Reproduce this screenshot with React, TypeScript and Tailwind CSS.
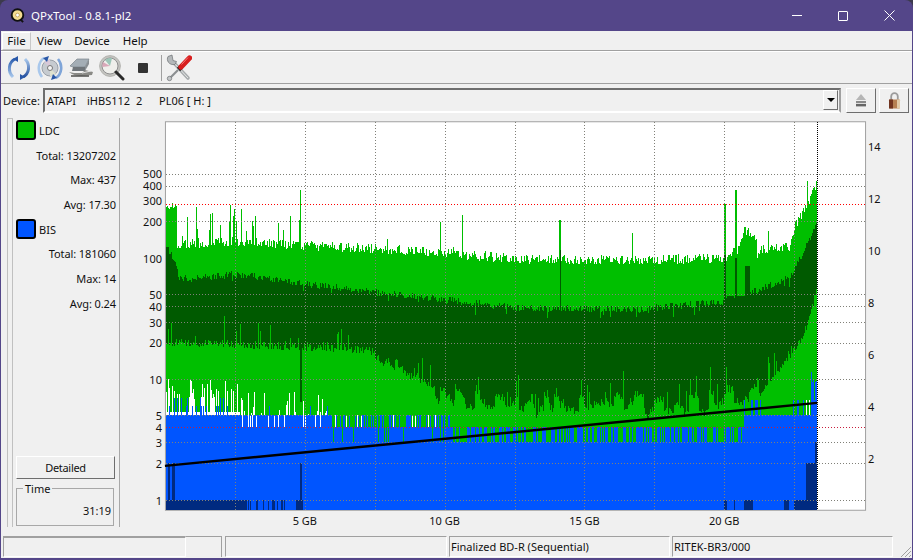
import React from "react";

// seeded random so the chart comes out the same on every load
const mulberry = (seed: number) => () => {
  seed |= 0;
  seed = (seed + 0x6d2b79f5) | 0;
  let t = Math.imul(seed ^ (seed >>> 15), 1 | seed);
  t = (t + Math.imul(t ^ (t >>> 7), 61 | t)) ^ t;
  return ((t ^ (t >>> 14)) >>> 0) / 4294967296;
};

const lerp = (pts: number[][], x: number) => {
  for (let i = 1; i < pts.length; i++) {
    if (x <= pts[i][0]) {
      const [x0, y0] = pts[i - 1];
      const [x1, y1] = pts[i];
      return y0 + ((y1 - y0) * (x - x0)) / (x1 - x0);
    }
  }
  return pts[pts.length - 1][1];
};

const topEnv = [
  [165, 206], [176, 207], [177, 244], [240, 241], [300, 245], [400, 250], [520, 259], [640, 260],
  [720, 258], [727, 256], [733, 250], [740, 250], [746, 228], [755, 236], [758, 250], [790, 247],
  [795, 228], [807, 205], [815, 190], [818, 182],
];
const darkTop = [
  [165, 246], [175, 260], [178, 278], [190, 279], [240, 274], [300, 283], [400, 295], [520, 308],
  [640, 309], [720, 302], [760, 290], [790, 277], [800, 260], [810, 240], [818, 222],
];
const darkBottom = [
  [165, 342], [300, 347], [370, 350], [400, 375], [440, 392], [500, 405], [700, 405], [755, 395],
  [775, 375], [790, 358], [800, 342], [810, 320], [818, 285],
];

const buildChart = () => {
  const rnd = mulberry(42);
  let light = "";
  let dark = "";
  let blue = "";
  let navy = "";
  let block = 0;
  for (let x = 166; x < 818; x++) {
    const px = x + 0.5;
    if (x % 5 === 0) block = rnd() * 22 - 11;
    let top = lerp(topEnv, x) + rnd() * 10 - 5;
    const spikeChance = x < 240 ? 0.22 : x < 300 ? 0.14 : 0.015;
    if (x > 177 && rnd() < spikeChance) top -= 8 + rnd() * 30;
    if (x > 745 && x < 760) top += rnd() * 10 - 5;
    if (x === 300) top = 190;
    if (x === 561 || x === 560) top = 220;
    if (x === 725 || x === 726) top = 204;
    if (x === 736 || x === 737) top = 190;

    let dTop = lerp(darkTop, x) + rnd() * 7 - 3.5;
    if (rnd() < 0.06) dTop += rnd() * 12;
    if (x === 725 || x === 726) dTop = 255;
    if (x === 736 || x === 737) dTop = 258;
    if ((x > 727 && x < 735) || (x > 738 && x < 746)) dTop = 296;
    if (x > 745 && x < 751) dTop = 266;
    let dBot = lerp(darkBottom, x) + rnd() * 8 - 4;
    if (x > 375 && x < 770) dBot += block;
    if (rnd() < 0.1) dBot -= rnd() * 26;
    if (x === 300 || x === 301) dBot = 402;
    if (x === 561) dTop = 250;
    if (x === 561) dBot = 408;

    // blue bars sit on fixed levels, the level shifts along the disc
    const p = rnd();
    let bTop = 427;
    if (x < 240) bTop = p < 0.7 ? 415 : p < 0.9 ? 406 : 398;
    else if (x < 330) bTop = p < 0.12 ? 427 : p < 0.92 ? 415 : 406;
    else if (x < 450) bTop = p < 0.08 ? 442 : p < 0.6 ? 427 : 415;
    else if (x < 745) bTop = p < 0.45 ? 442 : 427;
    else if (x < 812) bTop = p < 0.85 ? 415 : 400;
    else bTop = p < 0.5 ? 400 : 385 - rnd() * 20;

    // bottom of the light green below the dark band, white shows under it
    const q = rnd();
    let gBot = 415;
    if (x < 240) gBot = q < 0.45 ? 378 + rnd() * 22 : 412;
    else if (x < 330) gBot = q < 0.28 ? 392 + rnd() * 22 : 415;
    else if (x < 450) gBot = bTop === 442 ? 442 : q < 0.1 ? 415 : 427;
    else if (x < 745) gBot = 442;
    else if (x >= 790) gBot = q < 0.15 ? 400 : 415;

    light += `M${px} ${top.toFixed(1)}V${gBot.toFixed(1)}`;
    dark += `M${px} ${dTop.toFixed(1)}V${dBot.toFixed(1)}`;
    blue += `M${px} ${bTop.toFixed(1)}V510`;

    let nTop = 0;
    if (x < 247) nTop = 500;
    if (x < 176 && rnd() < 0.5) nTop = 463;
    if (x >= 247 && x < 285 && rnd() < 0.3) nTop = 500;
    if (x === 300 || x === 301) nTop = 463;
    if (x >= 296 && x < 303) nTop = nTop || 500;
    if (x >= 725 && x < 728) nTop = 500;
    if (x === 735) nTop = 500;
    if (x >= 745 && x < 754) nTop = 500;
    if (x >= 785 && x < 790) nTop = 500;
    if (x >= 795) nTop = 500;
    if (x >= 807) nTop = 463;
    if (x >= 816) nTop = 442;
    if (nTop) navy += `M${px} ${nTop}V510`;
  }
  return { light, dark, blue, navy };
};

const chart = buildChart();

const LEFT_TICKS: [string, number][] = [
  ["500", 174], ["400", 186], ["300", 201], ["200", 222], ["100", 259], ["50", 295], ["40", 307],
  ["30", 323], ["20", 343], ["10", 380], ["5", 416], ["4", 428], ["3", 443], ["2", 464], ["1", 501],
];
const GRID_Y = [174, 186, 221, 294, 306, 322, 343, 379, 415, 442, 463, 500];
const GRID_X = [235, 305, 375, 445, 515, 585, 655, 725, 795];
const RIGHT_TICKS: [string, number][] = [
  ["14", 147], ["12", 199], ["10", 251], ["8", 303], ["6", 355], ["4", 407], ["2", 459],
];
const X_TICKS: [string, number][] = [["5 GB", 305], ["10 GB", 445], ["15 GB", 585], ["20 GB", 725]];

const Chart = () => (
  <svg viewBox="122 115 791 415" className="w-[791px] h-[415px] block">
    <rect x="165.5" y="121.5" width="701" height="389" fill="#fff" stroke="#a0a0a0" />
    <g shapeRendering="crispEdges" fill="none" strokeWidth="1">
      <path d={chart.light} stroke="#00bf00" />
      <path d={chart.dark} stroke="#005a00" />
      <path d={chart.blue} stroke="#0055ff" />
      <path d={chart.navy} stroke="#002a80" />
      {GRID_Y.map((y) => (
        <path key={y} d={`M166 ${y + 0.5}H866`} stroke="#808078" strokeDasharray="1 2" />
      ))}
      {GRID_X.map((x) => (
        <path key={x} d={`M${x + 0.5} 122V510`} stroke="#808078" strokeDasharray="1 2" />
      ))}
      <path d="M166 204.5H866" stroke="#ff0000" strokeDasharray="1 2" />
      <path d="M166 427.5H866" stroke="#c81e3c" strokeDasharray="1 2" />
      <path d="M818.5 122V510" stroke="#000" strokeDasharray="1 1" />
    </g>
    <path d="M165 466L818 403" stroke="#000" strokeWidth="2.4" fill="none" />
    <g fontSize="11" fill="#111">
      {LEFT_TICKS.map(([t, y]) => (
        <text key={t} x="162" y={y + 4} textAnchor="end">{t}</text>
      ))}
      {RIGHT_TICKS.map(([t, y]) => (
        <text key={t} x="869" y={y + 4}>{t}</text>
      ))}
      {X_TICKS.map(([t, x]) => (
        <text key={t} x={x} y="525" textAnchor="middle">{t}</text>
      ))}
    </g>
  </svg>
);

const Stat = ({ label, value }: { label: string; value: string }) => (
  <div className="h-[24.7px] flex items-center justify-end whitespace-pre tracking-[-0.1px]">
    {label}: {value}
  </div>
);

const Swatch = ({ color, label }: { color: string; label: string }) => (
  <div className="h-[24.7px] flex items-center gap-[3px] pl-[3px]">
    <div className={`w-[20px] h-[20px] rounded-[3px] border-2 border-black ${color}`} />
    <span>{label}</span>
  </div>
);

const ReloadIcon = () => (
  <svg width="24" height="26" viewBox="0 0 24 26" fill="none">
    <defs>
      <linearGradient id="arcA" x1="0" y1="0" x2="0" y2="1">
        <stop offset="0" stopColor="#2d5fb0" />
        <stop offset="1" stopColor="#a9c8ec" />
      </linearGradient>
      <linearGradient id="arcB" x1="0" y1="0" x2="0" y2="1">
        <stop offset="0" stopColor="#a9c8ec" />
        <stop offset="1" stopColor="#234f9f" />
      </linearGradient>
    </defs>
    <path d="M8 4C2 7 0 16 6 22" stroke="url(#arcA)" strokeWidth="3" />
    <path d="M16 22C22 19 24 10 18 4" stroke="url(#arcB)" strokeWidth="3" />
    <path d="M6 4l5-3v6zM18 22l-5 3v-6z" fill="#2a58a8" />
  </svg>
);

const DiscReloadIcon = () => (
  <svg width="26" height="26" viewBox="0 0 26 26" fill="none">
    <circle cx="13" cy="13" r="8" fill="#c6cbd0" stroke="#9aa0a8" />
    <path d="M13 13L7 7A8 8 0 0 1 13 5z" fill="#d8c8d8" />
    <path d="M13 13L19 19A8 8 0 0 1 13 21z" fill="#dfe2d0" />
    <circle cx="13" cy="13" r="2.5" fill="#f5f5f5" stroke="#777" />
    <path d="M7 3C1 7 0 16 5 22" stroke="#a9c8ec" strokeWidth="2.6" />
    <path d="M19 23C25 19 26 10 21 4" stroke="#7fa5d8" strokeWidth="2.6" />
    <path d="M6 3l6-2-2 6zM20 23l-6 2 2-6z" fill="#2a58a8" />
  </svg>
);

const DriveIcon = () => (
  <svg width="26" height="22" viewBox="0 0 26 22" fill="none">
    <path d="M2 9L9 2h12l-4 8H5z" fill="#a4aeb6" stroke="#7c858c" strokeWidth=".7" />
    <path d="M5 10h12v4H4z" fill="#6f757a" />
    <path d="M17 10l4-8v5l-4 7z" fill="#888e93" />
    <path d="M1 15c4 3 8 4 12 4l11-1 1-3-8-2-3 3H6z" fill="#8a8a86" />
    <path d="M14 16l9-2" stroke="#e4e4e4" />
    <path d="M3 19h18" stroke="#4f4f4c" strokeWidth="1.4" />
  </svg>
);

const ScanIcon = () => (
  <svg width="26" height="26" viewBox="0 0 26 26" fill="none">
    <circle cx="11" cy="11" r="10.4" fill="#c4c4c0" stroke="#b4b4b0" />
    <circle cx="11" cy="11" r="8" fill="#efefeb" stroke="#8f8f8f" />
    <path d="M11 11L6 5A8 8 0 0 1 13 3.3z" fill="#9cc6b8" />
    <path d="M11 11L4 7A8 8 0 0 0 3.4 12z" fill="#d8a8b8" />
    <path d="M17 17L24 24" stroke="#2a2a2a" strokeWidth="3" strokeLinecap="round" />
  </svg>
);

const ToolsIcon = () => (
  <svg width="26" height="28" viewBox="0 0 26 28" fill="none">
    {/* wrench */}
    <path d="M9 10L22 24" stroke="#a8acae" strokeWidth="3.6" strokeLinecap="round" />
    <path d="M22 24L9 10" stroke="#e6e8e8" strokeWidth="1" />
    <path d="M2 2.5c-2 4 1 9 7 8l1.5-3L7 6.5 6 1z" fill="#b4b8ba" stroke="#6c7072" strokeWidth=".7" />
    {/* screwdriver */}
    <path d="M3 25L12 16" stroke="#8b8f91" strokeWidth="2.2" />
    <circle cx="3.5" cy="24.5" r="2.2" fill="#c4c6c8" stroke="#6c7072" strokeWidth=".7" />
    <path d="M12.5 15.5l3-3" stroke="#222" strokeWidth="4.6" />
    <path d="M15 13L23.5 4" stroke="#d81e1e" strokeWidth="5.4" strokeLinecap="round" />
    <path d="M15.5 10.5L22 3.5" stroke="#f47a7a" strokeWidth="1" />
  </svg>
);

const EjectIcon = () => (
  <svg width="12" height="14" viewBox="0 0 12 14">
    <path d="M6 1l5 6H1z" fill="#b5b5b5" />
    <rect x="1" y="8" width="10" height="2.2" fill="#8a8a8a" />
    <rect x="1" y="11" width="10" height="2.4" fill="#666" />
  </svg>
);

const LockIcon = () => (
  <svg width="13" height="17" viewBox="0 0 13 17" fill="none">
    <path d="M3.2 8V4.5a3.3 3.3 0 0 1 6.6 0V8" stroke="#9b9b9b" strokeWidth="1.8" />
    <rect x="1" y="7.5" width="11" height="9" rx="1" fill="#b57f52" />
    <rect x="1" y="7.5" width="4" height="9" fill="#70331f" />
    <rect x="9" y="7.5" width="3" height="9" fill="#e0c9a8" />
  </svg>
);

const raised = "border border-t-white border-l-white border-r-[#6e6e6e] border-b-[#6e6e6e]";

export default function App() {
  return (
    <div className="w-[913px] h-[560px] bg-[#3c3a4c]" style={{ fontFamily: "'Noto Sans', sans-serif" }}>
      <div className="w-full h-full rounded-t-[8px] overflow-hidden bg-[#544689] pb-[2px] px-[1px] flex flex-col text-[11px] leading-none text-[#111]">
        {/* Title bar */}
        <div className="h-[31px] shrink-0 flex items-center text-white -mx-[1px] pr-[1px]">
          <div className="w-[31px] flex justify-center pl-[3px]">
            <svg width="15" height="15" viewBox="0 0 16 16">
              <circle cx="8" cy="7.5" r="6.2" fill="#f4dc90" stroke="#111" strokeWidth="2" />
              <circle cx="8" cy="7.5" r="2" fill="#fff" stroke="#b08a40" strokeWidth=".7" />
              <path d="M11 12l3 3" stroke="#111" strokeWidth="2" />
            </svg>
          </div>
          <span className="text-[11.5px]">QPxTool - 0.8.1-pl2</span>
          <div className="ml-auto flex items-center">
            <div className="w-[46px] flex justify-center">
              <div className="w-[10px] h-px bg-white" />
            </div>
            <div className="w-[46px] flex justify-center">
              <div className="w-[10px] h-[10px] border border-white rounded-[1px]" />
            </div>
            <div className="w-[46px] flex justify-center">
              <svg width="11" height="11" viewBox="0 0 11 11">
                <path d="M.5.5l10 10M10.5.5l-10 10" stroke="#fff" />
              </svg>
            </div>
          </div>
        </div>

        <div className="flex-1 bg-[#f0f0f0] flex flex-col min-h-0">
          {/* Menu */}
          <div className="h-[19px] shrink-0 flex items-center pl-[1px] border-b border-[#a0a0a0] box-content text-[11.5px]">
            <div className="w-[29px] h-[18px] flex items-center justify-center border border-t-white border-l-white border-r-[#c8c8c8] border-b-[#c8c8c8]">File</div>
            <span className="ml-[6px]">View</span>
            <span className="ml-[12px]">Device</span>
            <span className="ml-[13px]">Help</span>
          </div>

          {/* Toolbar */}
          <div className="h-[33px] shrink-0 flex items-center pl-[2px] border-t border-t-white border-b border-b-[#a0a0a0]">
            <div className="w-[31px] flex justify-center"><ReloadIcon /></div>
            <div className="w-[31px] flex justify-center"><DiscReloadIcon /></div>
            <div className="w-[31px] flex justify-center"><DriveIcon /></div>
            <div className="w-[31px] flex justify-center"><ScanIcon /></div>
            <div className="w-[31px] flex justify-center"><div className="w-[10px] h-[10px] bg-[#333] rounded-[1px]" /></div>
            <div className="w-px h-[26px] bg-[#a0a0a0] ml-[3px]" />
            <div className="ml-[4px]"><ToolsIcon /></div>
          </div>

          {/* Device row */}
          <div className="h-[31px] shrink-0 flex items-center pl-[2px] pt-px">
            <span className="w-[40px]">Device:</span>
            <div className="w-[798px] h-[25px] flex items-center border-2 border-t-[#6e6e6e] border-l-[#6e6e6e] border-r-[#a0a0a0] border-b-white bg-[#f0f0f0] pl-[2px] pr-[1px]">
              <span className="w-[40px]">ATAPI</span>
              <span className="w-[49px]">iHBS112</span>
              <span className="w-[23px]">2</span>
              <span>PL06 [ H: ]</span>
              <div className={`ml-auto w-[15px] h-[20px] flex items-center justify-center ${raised}`}>
                <div className="w-0 h-0 border-x-[4px] border-x-transparent border-t-[4px] border-t-black" />
              </div>
            </div>
            <div className={`ml-[5px] w-[30px] h-[25px] flex items-center justify-center ${raised}`}><EjectIcon /></div>
            <div className={`ml-[3px] w-[30px] h-[25px] flex items-center justify-center ${raised}`}><LockIcon /></div>
          </div>

          {/* Main area */}
          <div className="h-[415px] shrink-0 flex">
            <div className="w-[121px] shrink-0 flex pt-[3px] pb-[3px]">
              <div className="ml-[6px] w-[6px] border-x border-t border-[#c0c0c0]" />
              <div className="flex-1 flex flex-col border-r border-[#a8a8a8] pr-[3px] mr-[2px]">
                <Swatch color="bg-[#00bf00]" label="LDC" />
                <Stat label="Total" value="13207202" />
                <Stat label="Max" value="437" />
                <Stat label="Avg" value="17.30" />
                <Swatch color="bg-[#0055ff]" label="BIS" />
                <Stat label="Total" value="181060" />
                <Stat label="Max" value="14" />
                <Stat label="Avg" value="0.24" />
                <div className={`mt-auto ml-[3px] mr-[1px] h-[23px] flex items-center justify-center tracking-[-0.3px] ${raised}`}>Detailed</div>
                <div className="relative mt-[9px] ml-[3px] mr-[2px] mb-[1px] h-[38px] border border-[#a8a8a8] flex items-end justify-end pr-[2px] pb-[9px]">
                  <span className="absolute -top-[6px] left-[6px] bg-[#f0f0f0] px-[2px]">Time</span>
                  31:19
                </div>
              </div>
            </div>
            <Chart />
          </div>

          {/* Status bar */}
          <div className="flex-1 flex items-stretch pt-[6px] pb-[1px] pl-[2px] min-h-0 relative">
            <div className="w-[183px] border-t-2 border-l border-t-[#a0a0a0] border-l-[#a0a0a0] border-r border-r-white border-b border-b-white" />
            <div className="w-[36px] border-t border-r border-[#a0a0a0]" />
            <div className="ml-[3px] w-[222px] border-t border-l border-[#a0a0a0] border-r-white border-r border-b border-b-white" />
            <div className="ml-[2px] w-[221px] border-t border-l border-[#a0a0a0] border-r-white border-r border-b border-b-white flex items-center pl-[1px]">Finalized BD-R (Sequential)</div>
            <div className="ml-[2px] w-[221px] border-t border-l border-[#a0a0a0] border-r-white border-r border-b border-b-white flex items-center pl-[1px]">RITEK-BR3/000</div>
            <svg className="absolute right-0 bottom-0" width="13" height="13" viewBox="0 0 13 13">
              <path d="M12 2L2 12M12 6L6 12M12 10l-2 2" stroke="#a0a0a0" />
            </svg>
          </div>
        </div>
      </div>
    </div>
  );
}
